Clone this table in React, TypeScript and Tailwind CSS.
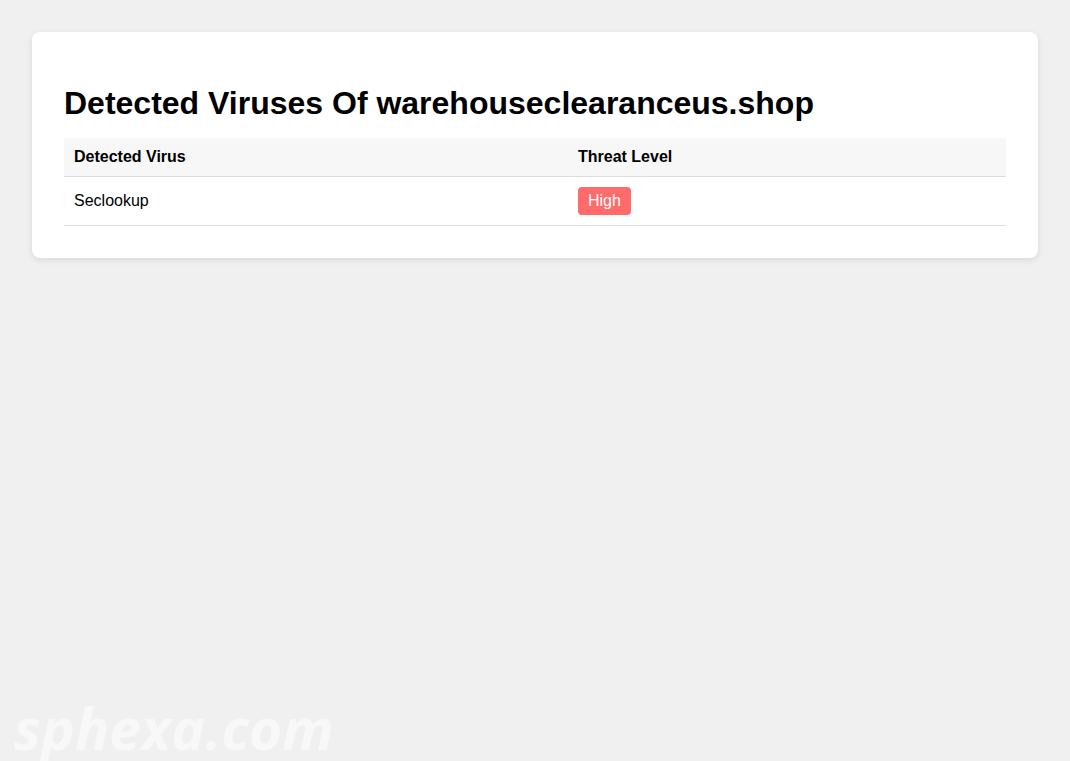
export default function App() {
  return (
    <div className="relative min-h-[761px] bg-[#f0f0f0] p-8 overflow-hidden" style={{ fontFamily: '"Liberation Sans", Arial, sans-serif' }}>
      <div className="bg-white rounded-lg shadow-[0_2px_6px_rgba(0,0,0,0.1)] p-8">
        <h1 className="text-[32px] leading-[37px] font-bold text-black mt-[21px] mb-4">Detected Viruses Of warehouseclearanceus.shop</h1>
        <table className="w-full border-collapse text-base text-black">
          <thead>
            <tr className="bg-[#f7f7f7]">
              <th className="w-[504px] text-left font-bold px-[10px] py-[10px] leading-[18px] border-b border-[#ddd]">Detected Virus</th>
              <th className="text-left font-bold px-[10px] py-[10px] leading-[18px] border-b border-[#ddd]">Threat Level</th>
            </tr>
          </thead>
          <tbody>
            <tr>
              <td className="px-[10px] py-[10px] leading-[18px] border-b border-[#ddd]">Seclookup</td>
              <td className="px-[10px] py-[10px] leading-[18px] border-b border-[#ddd]">
                <span className="inline-block bg-[#ff6b6b] text-white rounded-[4px] px-[10px] py-[5px] leading-[18px]">High</span>
              </td>
            </tr>
          </tbody>
        </table>
      </div>
      <div className="absolute left-[14px] top-[694px] text-[57px] leading-[68px] font-bold italic text-white/50 select-none" style={{ fontFamily: '"Open Sans", sans-serif' }}>sphexa.com</div>
    </div>
  );
}
